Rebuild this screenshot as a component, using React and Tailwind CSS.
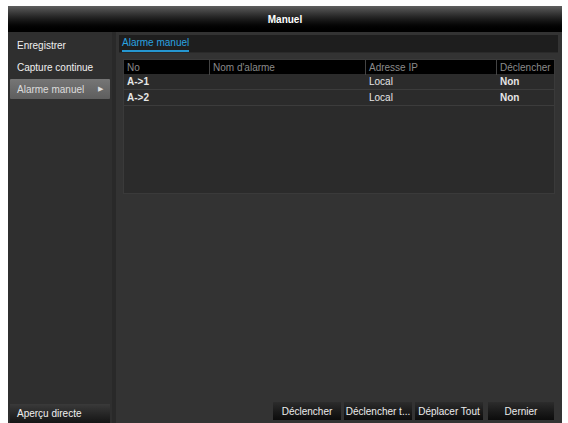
export default function App() {
  const rows = [
    { no: 'A->1', name: '', ip: 'Local', trig: 'Non' },
    { no: 'A->2', name: '', ip: 'Local', trig: 'Non' },
  ];

  return (
    <div className="w-[568px] h-[423px] bg-white pl-[8px] pr-[6px] pt-[6px] font-['Liberation_Sans',Arial,sans-serif] text-[10px]">
      <div className="h-full flex flex-col bg-[#333333] overflow-hidden">
        {/* title bar */}
        <div className="h-[26px] shrink-0 flex items-center justify-center bg-gradient-to-b from-[#5e5e5e] via-[#1c1c1c] to-black text-white font-bold">
          Manuel
        </div>

        <div className="flex flex-1 min-h-0">
          {/* sidebar */}
          <aside className="w-[108px] shrink-0 flex flex-col justify-between bg-[#2f2f2f] border-r-4 border-[#292929]">
            <div className="flex flex-col pt-[2px] px-[2px]">
              <div className="h-[22px] flex items-center px-[7px] text-[#f0f0f0]">Enregistrer</div>
              <div className="h-[23px] flex items-center px-[7px] text-[#f0f0f0]">Capture continue</div>
              <div className="h-[20px] flex items-center justify-between px-[7px] bg-gradient-to-b from-[#767676] to-[#5e5e5e] text-[#dcdcdc] rounded-[1px]">
                <span>Alarme manuel</span>
                <span className="text-[7px]">▶</span>
              </div>
            </div>
            <div className="h-[19px] mx-[2px] flex items-center px-[7px] bg-gradient-to-b from-[#3a3a3a] to-[#151515] text-[#f0f0f0]">
              Aperçu directe
            </div>
          </aside>

          {/* main */}
          <main className="flex-1 flex flex-col justify-between pl-[3px] pr-[4px] pt-[3px] pb-[3px]">
            <div className="flex flex-col">
              <div className="h-[18px] bg-[#1e1e1e] border-b border-[#2a2a2a] flex items-end px-[3px]">
                <span className="text-[#2aa3e0] border-b-2 border-[#2596d0] pb-[1px] leading-[12px]">Alarme manuel</span>
              </div>

              <div className="mt-[6px] ml-[4px] mr-[3px] h-[135px] bg-[#2b2b2b] border border-[#3a3a3a]">
                <div className="grid grid-cols-[86px_156px_131px_1fr] h-[14px] bg-black text-[#8a8a8a]">
                  <div className="px-[3px] flex items-center border-r border-[#444]">No</div>
                  <div className="px-[3px] flex items-center border-r border-[#444]">Nom d'alarme</div>
                  <div className="px-[3px] flex items-center border-r border-[#444]">Adresse IP</div>
                  <div className="px-[3px] flex items-center">Déclencher</div>
                </div>
                {rows.map((r) => (
                  <div key={r.no} className="grid grid-cols-[86px_156px_131px_1fr] h-[16px] border-b border-[#3c3c3c] text-[#e6e6e6]">
                    <div className="px-[3px] flex items-center font-bold">{r.no}</div>
                    <div className="px-[3px] flex items-center">{r.name}</div>
                    <div className="px-[3px] flex items-center">{r.ip}</div>
                    <div className="px-[3px] flex items-center font-bold">{r.trig}</div>
                  </div>
                ))}
              </div>
            </div>

            <div className="flex justify-end gap-[3px] pr-[4px]">
              {['Déclencher', 'Déclencher t...', 'Déplacer Tout'].map((b) => (
                <button key={b} className="h-[18px] w-[68px] bg-gradient-to-b from-[#2c2c2c] to-[#0c0c0c] text-[#ececec] whitespace-nowrap overflow-hidden">
                  {b}
                </button>
              ))}
              <button className="h-[18px] w-[66px] ml-[2px] bg-gradient-to-b from-[#2c2c2c] to-[#0c0c0c] text-[#ececec]">
                Dernier
              </button>
            </div>
          </main>
        </div>
      </div>
    </div>
  );
}
